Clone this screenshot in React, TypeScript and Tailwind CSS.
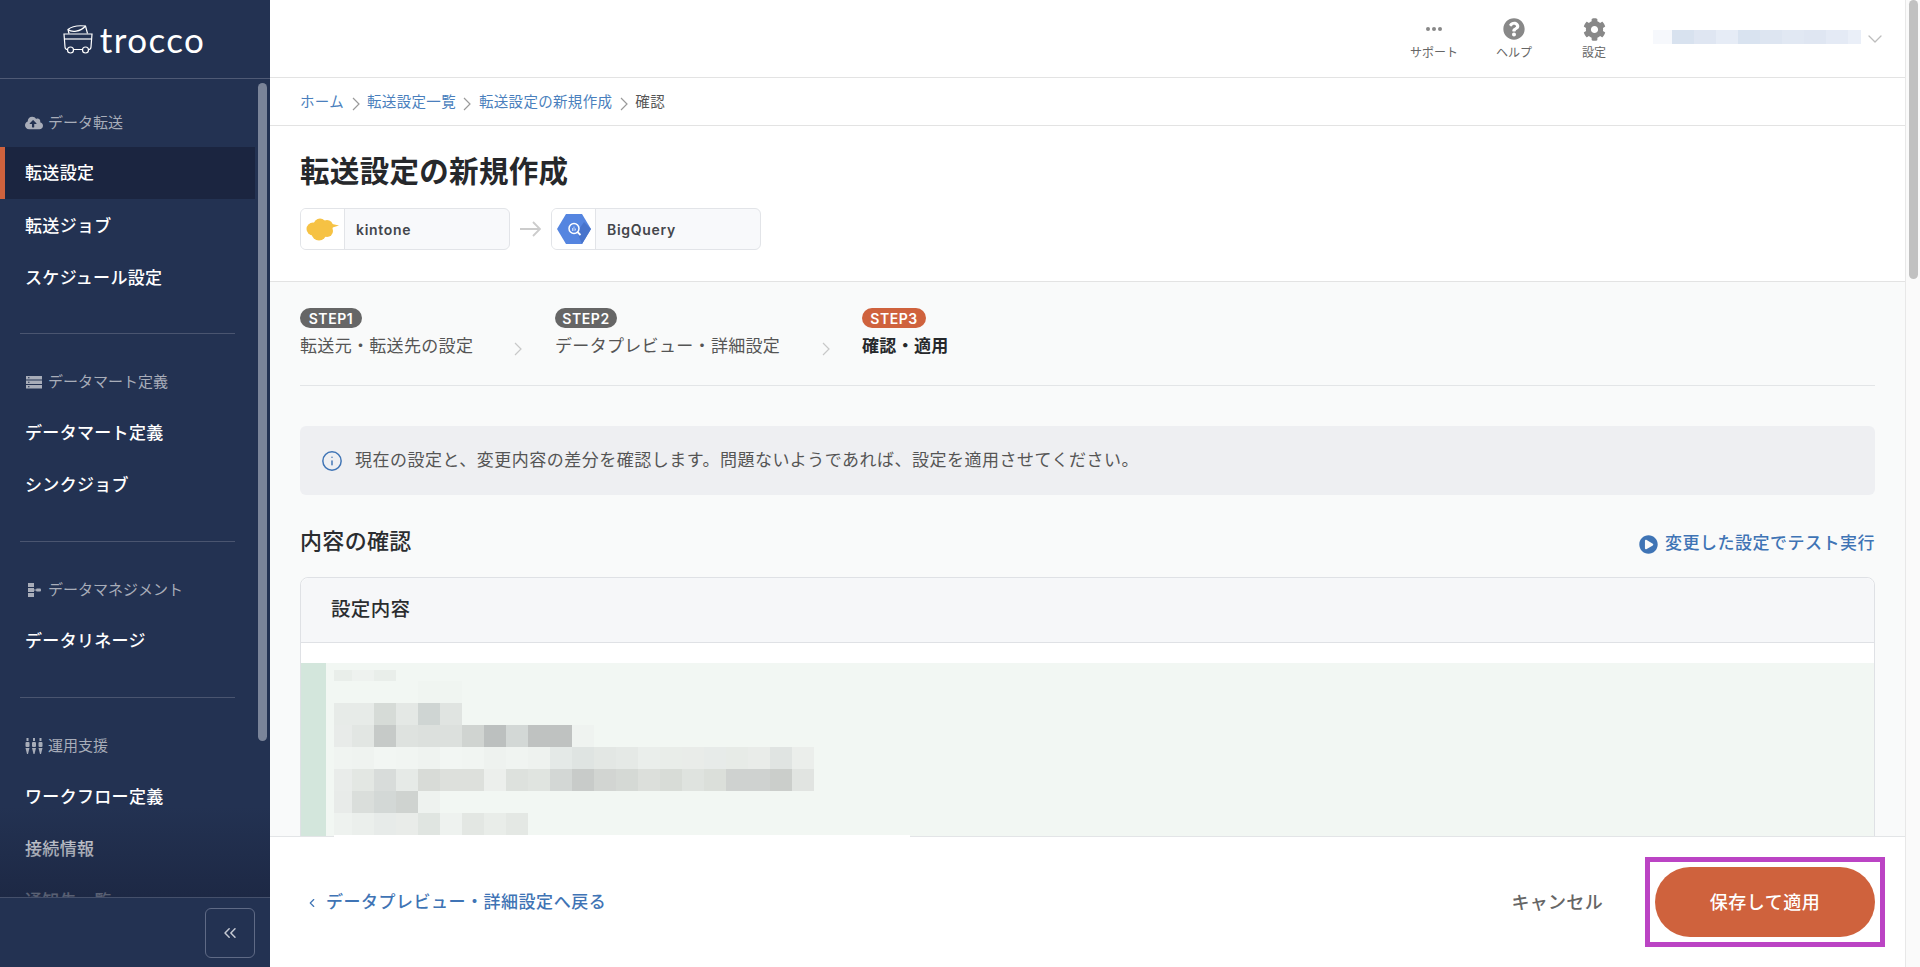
import { ChevronDown, ChevronLeft, ChevronsLeft, Info } from "lucide-react";
import { FaCloudUploadAlt, FaCog, FaPlayCircle, FaQuestionCircle } from "react-icons/fa";

const ListIcon = () => (
  <svg viewBox="0 0 16 14" className="h-[14px] w-[16px] fill-current">
    <path fillRule="evenodd" d="M0 1h16v3.500H0zM2 2.200v1h1.500v-1zM0 5.500h16V9H0zM2 6.700v1h1.500v-1zM0 10h16v3.500H0zM2 11.200v1h1.500v-1z" />
  </svg>
);

const DataManagementIcon = () => (
  <svg viewBox="0 0 16 16" className="h-[16px] w-[16px] fill-current">
    <rect x="2" y="1" width="6" height="4" />
    <rect x="2" y="6" width="6" height="4" />
    <rect x="2" y="11" width="6" height="4" />
    <rect x="8" y="7.500" width="2" height="1" />
    <rect x="10" y="6.500" width="5" height="3" rx="1" />
  </svg>
);

const SlidersIcon = () => (
  <svg viewBox="0 0 18 16" className="h-[16px] w-[18px] fill-current">
    <rect x="1.500" y="0" width="2" height="3" />
    <rect x="0.500" y="4" width="4" height="5" rx="1" />
    <path d="M0.500 10h4L3 16H2z" />
    <rect x="8" y="0" width="2" height="3" />
    <rect x="7" y="4" width="4" height="5" rx="1" />
    <path d="M7 10h4L9.500 16h-1z" />
    <rect x="14.500" y="0" width="2" height="3" />
    <rect x="13.500" y="4" width="4" height="5" rx="1" />
    <path d="M13.500 10h4L16 16h-1z" />
  </svg>
);

const CartLogo = () => (
  <svg viewBox="0 0 30 29" className="h-[29px] w-[30px] fill-none stroke-white" strokeWidth="1.2">
    <path d="M6 8.500 5 4.500C8.500 1.500 16 .3 22.500 1l2 7.500" />
    <path d="M5 4.500c3.500 3 12.500 2.500 17.500-3.500" />
    <path d="M1 9h28l-1 13c0 1.500-1 2.500-2.500 2.500h-21C3 24.500 2 23.500 2 22z" />
    <path d="M1.500 14h27" />
    <circle cx="7.500" cy="25" r="3" className="fill-[#233252]" />
    <circle cx="22.500" cy="25" r="3" className="fill-[#233252]" />
  </svg>
);

const KintoneIcon = () => (
  <svg viewBox="0 0 34 24" className="h-[24px] w-[34px] fill-[#f6c244]">
    <circle cx="7" cy="12" r="6.500" />
    <circle cx="14" cy="8" r="6.500" />
    <circle cx="21" cy="9" r="6" />
    <circle cx="13" cy="16" r="7.500" />
    <circle cx="21" cy="14" r="6" />
    <path d="M24 6.500 33 8.500 25 11z" />
  </svg>
);

const BigQueryIcon = () => (
  <svg viewBox="0 0 34 32" className="h-[32px] w-[34px]">
    <path d="M9 1h16l9 15-9 15H9L0 16z" className="fill-[#5585e0]" />
    <path d="M20 19 25 31l9-15-7-7z" className="fill-[#4874cc]" />
    <circle cx="17" cy="15.500" r="5" className="fill-none stroke-white" strokeWidth="1.500" />
    <path d="m20.500 19 3 3" className="stroke-white" strokeWidth="1.800" />
    <path d="M15.500 15v3M17 13.500v4.500M18.500 15.500v2" className="stroke-white/80" strokeWidth="0.800" />
  </svg>
);

const SmallChevron = ({ className }: { className: string }) => (
  <svg viewBox="0 0 8 14" className={`${className} h-[14px] w-[8px] shrink-0 fill-none stroke-current`} strokeWidth="1.200">
    <path d="M1 1l6 6-6 6" />
  </svg>
);

const NavSection = ({
  icon,
  label,
  items,
  active,
  first,
}: {
  icon: React.ReactNode;
  label: string;
  items: string[];
  active?: string;
  first?: boolean;
}) => (
  <div className={first ? "pt-[33px]" : "pt-[37px]"}>
    <div className="mb-[15px] flex h-[20px] items-center gap-[5px] pl-[25px] pt-[2px] text-[15px] tracking-normal text-[#a8adb9]">
      <span className="flex w-[18px] justify-center">{icon}</span>
      {label}
    </div>
    {items.map((item) => (
      <div
        key={item}
        className={
          item === active
            ? "flex h-[52px] w-[255px] items-center border-l-[5px] border-[#cf623d] bg-[#1b2540] pl-[20px] pt-[2px] text-[17px] font-medium text-white"
            : "flex h-[52px] items-center pl-[25px] pt-[3px] text-[17px] font-medium text-white"
        }
      >
        {item}
      </div>
    ))}
  </div>
);

const Divider = ({ wide }: { wide?: boolean }) => (
  <div className={wide ? "mx-[20px] mt-[31px] h-px w-[215px] bg-[#4a5570]" : "mx-[20px] mt-[30px] h-px w-[215px] bg-[#4a5570]"} />
);

const Sidebar = () => (
  <aside className="flex h-full w-[270px] shrink-0 flex-col bg-[#233252]">
    <div className="flex h-[79px] shrink-0 items-center justify-center gap-[7px] border-b border-[#4f5a75] pr-[2px]">
      <CartLogo />
      <span className="font-['Lato',sans-serif] text-[35px] font-normal leading-none tracking-[0.04em] text-white">trocco</span>
    </div>
    <div className="relative min-h-0 flex-1 overflow-hidden">
      <NavSection first icon={<FaCloudUploadAlt className="text-[18px]" />} label="データ転送" items={["転送設定", "転送ジョブ", "スケジュール設定"]} active="転送設定" />
      <Divider />
      <NavSection icon={<ListIcon />} label="データマート定義" items={["データマート定義", "シンクジョブ"]} />
      <Divider wide />
      <NavSection icon={<DataManagementIcon />} label="データマネジメント" items={["データリネージ"]} />
      <Divider wide />
      <NavSection icon={<SlidersIcon />} label="運用支援" items={["ワークフロー定義", "接続情報", "通知先一覧"]} />
      <div className="absolute inset-x-0 bottom-0 h-[90px] bg-gradient-to-b from-[#1b2540]/0 to-[#1b2540]/75" />
      <div className="absolute left-[258px] top-[4px] h-[658px] w-[9px] rounded-full bg-[#7a8499]" />
    </div>
    <div className="flex h-[70px] shrink-0 items-center justify-end border-t border-[#45506b] pr-[15px]">
      <button className="flex h-[50px] w-[50px] items-center justify-center rounded-md border border-[#5f6a85] text-[#c5c9d2]">
        <ChevronsLeft size={20} strokeWidth={1.8} />
      </button>
    </div>
  </aside>
);

const TopAction = ({ icon, label }: { icon: React.ReactNode; label: string }) => (
  <div className="flex w-[60px] flex-col items-center">
    <div className="flex h-[24px] items-center justify-center text-[#888888]">{icon}</div>
    <div className="mt-[3px] text-[12px] leading-[18px] tracking-normal text-[#666666]">{label}</div>
  </div>
);

const Topbar = () => (
  <div className="flex h-[78px] shrink-0 items-center border-b border-[#e3e3e3] bg-white">
    <div className="ml-[1134px] flex gap-[20px] self-start pt-[17px]">
      <TopAction
        label="サポート"
        icon={
          <span className="flex gap-[2px]">
            <span className="h-[4px] w-[4px] rounded-full bg-[#888888]" />
            <span className="h-[4px] w-[4px] rounded-full bg-[#888888]" />
            <span className="h-[4px] w-[4px] rounded-full bg-[#888888]" />
          </span>
        }
      />
      <TopAction label="ヘルプ" icon={<FaQuestionCircle className="text-[22px]" />} />
      <TopAction label="設定" icon={<FaCog className="text-[23px]" />} />
    </div>
    <div className="ml-[29px] flex h-[14px] w-[208px] -translate-y-[2px]">
      <span className="w-[19px] bg-[#f6f8fc]" />
      <span className="w-[22px] bg-[#d8e2ef]" />
      <span className="w-[22px] bg-[#dfe6f2]" />
      <span className="w-[22px] bg-[#e6ecf6]" />
      <span className="w-[22px] bg-[#d9e3f0]" />
      <span className="w-[22px] bg-[#dde5f1]" />
      <span className="w-[22px] bg-[#e1e8f3]" />
      <span className="w-[22px] bg-[#dfe6f2]" />
      <span className="w-[22px] bg-[#e4eaf5]" />
      <span className="w-[13px] bg-[#eaeff8]" />
    </div>
    <ChevronDown size={24} strokeWidth={1.3} className="ml-[2px] text-[#bdbdbd]" />
  </div>
);

const crumbLink = "text-[14.5px] text-[#4a7fbd]";
const crumbChevron = "mx-[7.5px] mt-[4px] h-[12px] text-[#9a9a9a]";

const Breadcrumb = () => (
  <div className="flex h-[48px] shrink-0 items-center border-b border-[#e3e3e3] bg-white px-[30px]">
    <span className={crumbLink}>ホーム</span>
    <SmallChevron className={crumbChevron} />
    <span className={crumbLink}>転送設定一覧</span>
    <SmallChevron className={crumbChevron} />
    <span className={crumbLink}>転送設定の新規作成</span>
    <SmallChevron className={crumbChevron} />
    <span className="text-[14.5px] text-[#555555]">確認</span>
  </div>
);

const ConnectorCard = ({ icon, name }: { icon: React.ReactNode; name: string }) => (
  <div className="flex h-[42px] w-[210px] overflow-hidden rounded-md border border-[#e2e4e8] bg-[#f8f9fb]">
    <div className="flex w-[44px] items-center justify-center border-r border-[#e2e4e8] bg-white">{icon}</div>
    <div className="flex items-center pl-[11px] text-[14px] font-semibold tracking-[0.05em] text-[#44464b]">{name}</div>
  </div>
);

const TitleBlock = () => (
  <div className="h-[156px] shrink-0 border-b border-[#e3e3e3] bg-white px-[30px] pt-[24px]">
    <h1 className="text-[29.5px] font-semibold leading-[42px] text-[#26282b]">転送設定の新規作成</h1>
    <div className="mt-[16px] flex items-center">
      <ConnectorCard icon={<KintoneIcon />} name="kintone" />
      <svg viewBox="0 0 21 16" className="mx-[10px] h-[16px] w-[21px] fill-none stroke-[#cccccc]" strokeWidth="1.800">
        <path d="M0 8h19.500M13 1l7 7-7 7" />
      </svg>
      <ConnectorCard icon={<BigQueryIcon />} name="BigQuery" />
    </div>
  </div>
);

const Step = ({ step, label, current, width }: { step: string; label: string; current?: boolean; width: string }) => (
  <div className={width}>
    <span
      className={
        current
          ? "flex h-[20px] w-[64px] items-center justify-center rounded-full bg-[#cf623d] text-[14px] font-semibold tracking-[0.04em] text-white"
          : "flex h-[20px] w-[62px] items-center justify-center rounded-full bg-[#666666] text-[14px] font-semibold tracking-[0.04em] text-white"
      }
    >
      {step}
    </span>
    <div className={current ? "mt-[6px] text-[17px] font-bold leading-[24px] text-[#26282b]" : "mt-[6px] text-[17px] leading-[24px] text-[#555555]"}>
      {label}
    </div>
  </div>
);

const Steps = () => (
  <div className="flex h-[78px] items-start border-b border-[#e3e5e7]">
    <Step step="STEP1" label="転送元・転送先の設定" width="w-[214px]" />
    <SmallChevron className="mt-[34px] mr-[33px] text-[#c8c8c8]" />
    <Step step="STEP2" label="データプレビュー・詳細設定" width="w-[267px]" />
    <SmallChevron className="mt-[34px] mr-[32px] text-[#c8c8c8]" />
    <Step current step="STEP3" label="確認・適用" width="w-[100px]" />
  </div>
);

// mosaic cells of the blurred diff, one class per cell, first cell is narrower
const diffRows: { height: string; cells: string[] }[] = [
  { height: "h-[11px]", cells: ["bg-[#e9eeea]", "bg-[#eef2ef]", "bg-[#e9eeea]"] },
  { height: "h-[22px]", cells: ["bg-[#f2f7f3]", "bg-[#f2f7f3]", "bg-[#f2f7f3]", "bg-[#f2f7f3]", "bg-[#f0f5f1]", "bg-[#f0f5f1]"] },
  { height: "h-[22px]", cells: ["bg-[#e7ebe8]", "bg-[#e7ebe8]", "bg-[#d6dbd7]", "bg-[#e4e8e5]", "bg-[#cfd5d3]", "bg-[#e0e4e1]"] },
  {
    height: "h-[22px]",
    cells: ["bg-[#e8ebe9]", "bg-[#e2e6e3]", "bg-[#c6cac8]", "bg-[#dee2df]", "bg-[#dce0dd]", "bg-[#dce0dd]", "bg-[#d0d4d1]", "bg-[#bcc0bf]", "bg-[#d3d8d6]", "bg-[#bfc2c1]", "bg-[#bfc2c1]", "bg-[#eff3f0]"],
  },
  {
    height: "h-[22px]",
    cells: ["bg-[#f0f4f1]", "bg-[#eff3f0]", "bg-[#f2f6f3]", "bg-[#f1f5f2]", "bg-[#eff3f0]", "bg-[#f2f6f3]", "bg-[#f1f5f2]", "bg-[#eef2ef]", "bg-[#f0f4f1]", "bg-[#eef2ef]", "bg-[#e4e9e7]", "bg-[#dfe4e2]", "bg-[#e3e7e4]", "bg-[#e5e9e6]", "bg-[#eaeeeb]", "bg-[#e9ede9]", "bg-[#e9ece9]", "bg-[#e7ebe9]", "bg-[#e7ebe7]", "bg-[#e9ece9]", "bg-[#e0e4e2]", "bg-[#ebeeeb]"],
  },
  {
    height: "h-[22px]",
    cells: ["bg-[#e9ecea]", "bg-[#e3e7e3]", "bg-[#d8dcda]", "bg-[#e6eae7]", "bg-[#d8dbd7]", "bg-[#dde0dc]", "bg-[#dde0dc]", "bg-[#ecefec]", "bg-[#dde1dd]", "bg-[#e0e4e0]", "bg-[#d3d7d5]", "bg-[#c8cbc9]", "bg-[#d2d5d2]", "bg-[#d5d9d5]", "bg-[#dcdfdb]", "bg-[#d8dcd7]", "bg-[#dfe3df]", "bg-[#dbdfda]", "bg-[#cfd2d0]", "bg-[#cfd2d0]", "bg-[#cbcecb]", "bg-[#e1e4e1]"],
  },
  { height: "h-[22px]", cells: ["bg-[#e8ebe9]", "bg-[#dadedb]", "bg-[#d3d8d6]", "bg-[#cfd3d0]", "bg-[#eef2ef]"] },
  { height: "h-[22px]", cells: ["bg-[#eef2ef]", "bg-[#ebefec]", "bg-[#e7ebe9]", "bg-[#e9ece9]", "bg-[#e0e5e1]", "bg-[#eef2ef]", "bg-[#e3e7e3]", "bg-[#e9ede9]", "bg-[#e4e8e4]"] },
];

const DiffCard = () => (
  <div className="mt-[21px] rounded-t-lg border border-[#dfe1e5] bg-white">
    <div className="flex h-[65px] items-center rounded-t-lg border-b border-[#dfe1e5] bg-[#f6f7f9] pl-[30px] text-[19.5px] font-medium text-[#2b2d30]">
      設定内容
    </div>
    <div className="mt-[20px] flex bg-[#f2f7f3]">
      <div className="w-[25px] shrink-0 bg-[#d3e6dc]" />
      <div className="pb-[4px] pl-[8px] pt-[7px]">
        {diffRows.map((row, rowIndex) => (
          <div key={rowIndex} className={`flex ${row.height}`}>
            {row.cells.map((cell, cellIndex) => (
              <span key={cellIndex} className={cellIndex === 0 ? `w-[18px] ${cell}` : `w-[22px] ${cell}`} />
            ))}
          </div>
        ))}
      </div>
    </div>
  </div>
);

const Footer = () => (
  <div className="relative flex h-[131px] shrink-0 items-center border-t border-[#e3e5e7] bg-white pl-[36px] pr-[30px]">
    <div className="absolute -top-[2px] left-[64px] h-[3px] w-[576px] bg-white" />
    <ChevronLeft size={14} strokeWidth={2} className="-ml-[1px] mt-[1px] text-[#3f74b5]" />
    <span className="ml-[7px] mt-[1px] text-[17px] font-medium tracking-[0.03em] text-[#3f74b5]">データプレビュー・詳細設定へ戻る</span>
    <span className="ml-auto text-[18px] font-medium text-[#666666]">キャンセル</span>
    <div className="relative ml-[52px]">
      <button className="h-[70px] w-[220px] rounded-full bg-[#cf623d] text-[18px] font-medium tracking-[0.03em] text-white">保存して適用</button>
      <div className="absolute -inset-x-[10px] -inset-y-[10px] border-[5px] border-[#bb44c4]" />
    </div>
  </div>
);

const App = () => (
  <div className="flex h-[967px] overflow-hidden bg-white font-['Inter','Noto_Sans_CJK_JP',sans-serif] tracking-[0.02em]">
    <Sidebar />
    <main className="flex min-w-0 flex-1 flex-col">
      <Topbar />
      <Breadcrumb />
      <TitleBlock />
      <div className="min-h-0 flex-1 overflow-hidden bg-[#f9fafa] px-[30px] pt-[26px]">
        <Steps />
        <div className="mt-[40px] flex h-[69px] items-center rounded-md bg-[#eeeff2] pl-[21px] text-[17px] tracking-[0.5px] text-[#555555]">
          <Info size={22} strokeWidth={1.6} className="mr-[12px] text-[#3f74b5]" />
          現在の設定と、変更内容の差分を確認します。問題ないようであれば、設定を適用させてください。
        </div>
        <div className="mt-[31px] flex h-[30px] items-center justify-between">
          <h2 className="text-[22px] font-medium text-[#2b2d30]">内容の確認</h2>
          <div className="flex items-center pt-[6px] text-[17px] font-medium tracking-[0.03em] text-[#3f74b5]">
            <FaPlayCircle className="mr-[7px] text-[19px]" />
            変更した設定でテスト実行
          </div>
        </div>
        <DiffCard />
      </div>
      <Footer />
    </main>
    <div className="h-full w-[15px] shrink-0 border-l border-[#e8e8e8] bg-[#fafafa] pl-[3px]">
      <div className="h-[279px] w-[9px] rounded-full bg-[#c1c1c1]" />
    </div>
  </div>
);

export default App;
